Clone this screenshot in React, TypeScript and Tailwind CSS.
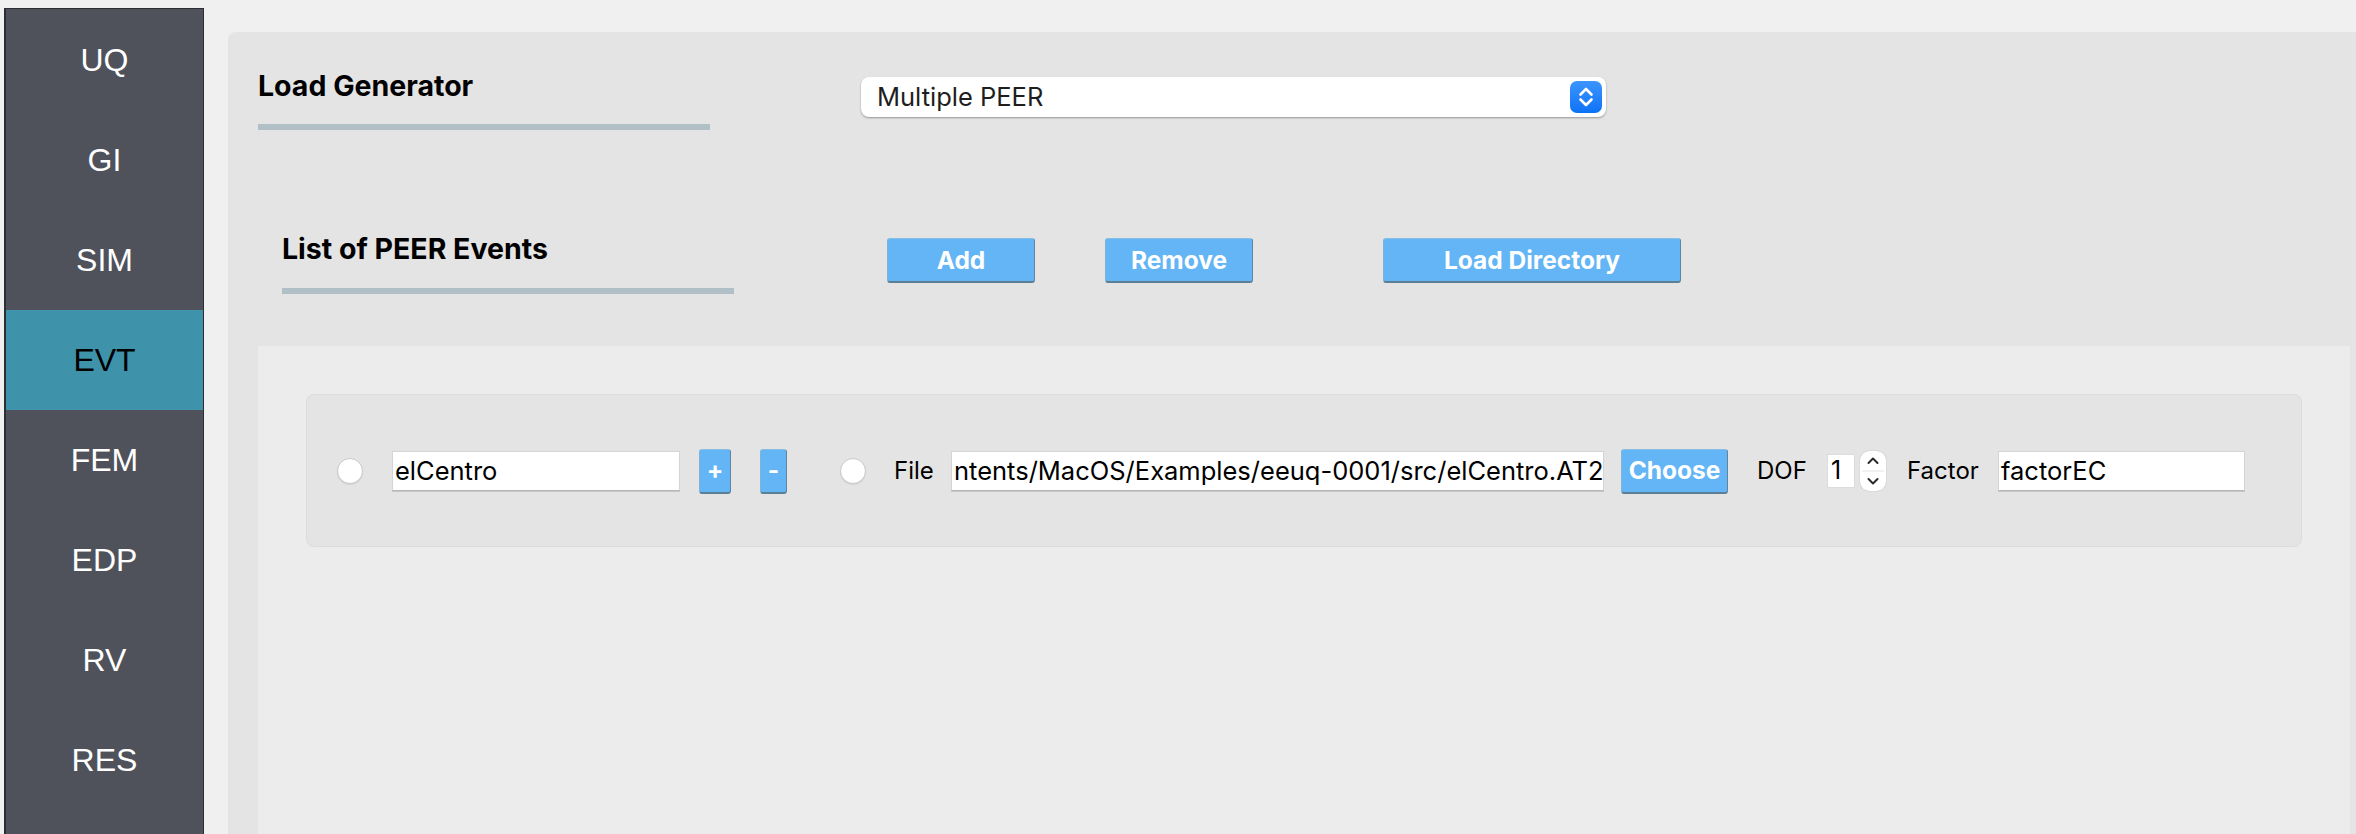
import React from "react";

const sideItems = ["UQ", "GI", "SIM", "EVT", "FEM", "EDP", "RV", "RES"];

function BlueButton({ label, w, extra = "" }: { label: string; w: string; extra?: string }) {
  return (
    <div
      className={`${w} ${extra} h-[45px] flex items-center justify-center bg-[#64b5f6] rounded-[3px] border border-t-[#86bfe3] border-l-[#7fb4d8] border-r-[#5d86a0] border-b-[2px] border-b-[#5d7f94] text-white font-bold text-[24.5px] leading-none shrink-0`}
    >
      {label}
    </div>
  );
}

function Radio() {
  return (
    <div className="w-[26px] h-[26px] rounded-full bg-white border border-[#c9c9c9] shadow-[0_1px_1px_rgba(0,0,0,0.08)] shrink-0" />
  );
}

function TextBox({ w, text, extra = "" }: { w: string; text: string; extra?: string }) {
  return (
    <div
      className={`${w} ${extra} h-[40px] bg-white border border-[#d4d4d4] border-b-[#b5b5b5] shadow-[0_1px_0_rgba(0,0,0,0.12)] flex items-center pl-[2px] pt-[1px] overflow-hidden whitespace-nowrap text-[25.5px] text-black shrink-0`}
    >
      {text}
    </div>
  );
}

export default function App() {
  return (
    <div
      className="w-[2356px] h-[834px] bg-[#f0f0f0] flex overflow-hidden"
      style={{ fontFamily: "Inter, 'Liberation Sans', sans-serif" }}
    >
      {/* Sidebar */}
      <div className="ml-[4px] mt-[8px] w-[200px] h-[826px] bg-[#4f525a] border-l-2 border-r border-t border-[#2d2e31] pt-[1px] shrink-0">
        {sideItems.map((s) => (
          <div
            key={s}
            className={`h-[100px] flex items-center justify-center text-[32px] ${
              s === "EVT" ? "bg-[#3e92a9] text-black" : "text-white"
            }`}
            style={{ fontFamily: "'Liberation Sans', Arial, sans-serif" }}
          >
            {s}
          </div>
        ))}
      </div>

      {/* Main panel */}
      <div className="ml-[24px] mt-[32px] flex-1 h-[802px] bg-[#e4e4e4] rounded-tl-[8px] pl-[30px] pr-[6px] flex flex-col">
        {/* Row 1 */}
        <div className="pt-[36px] flex items-start">
          <div className="w-[452px] flex flex-col shrink-0">
            <div className="mt-[2px] h-[32px] leading-[32px] text-[28.5px] font-bold text-black whitespace-nowrap">Load Generator</div>
            <div className="mt-[22px] h-[6px] bg-[#b1c0c7]" />
          </div>
          <div className="ml-[151px] mt-[9px] w-[745px] h-[40px] bg-white rounded-[8px] shadow-[0_1px_2px_rgba(0,0,0,0.35)] flex items-center pl-[16px] pr-[4px] shrink-0">
            <span className="flex-1 text-[25.5px] text-[#1e1e1e] leading-none">Multiple PEER</span>
            <div className="w-[32px] h-[32px] rounded-[7px] bg-gradient-to-b from-[#3b95ff] to-[#0a72f5] flex items-center justify-center">
              <svg width="32" height="32" viewBox="0 0 32 32" fill="none">
                <path d="M10.5 13.5 L16 8 L21.5 13.5" stroke="white" strokeWidth="2.6" strokeLinecap="round" strokeLinejoin="round" />
                <path d="M10.5 18.5 L16 24 L21.5 18.5" stroke="white" strokeWidth="2.6" strokeLinecap="round" strokeLinejoin="round" />
              </svg>
            </div>
          </div>
        </div>

        {/* Row 2 */}
        <div className="mt-[101px] flex items-start">
          <div className="ml-[24px] w-[452px] flex flex-col shrink-0">
            <div className="mt-[2px] h-[32px] leading-[32px] text-[28.5px] font-bold text-black whitespace-nowrap">List of PEER Events</div>
            <div className="mt-[23px] h-[6px] bg-[#b1c0c7]" />
          </div>
          <BlueButton label="Add" w="w-[148px]" extra="ml-[153px] mt-[7px]" />
          <BlueButton label="Remove" w="w-[148px]" extra="ml-[70px] mt-[7px]" />
          <BlueButton label="Load Directory" w="w-[298px]" extra="ml-[130px] mt-[7px]" />
        </div>

        {/* Inner list area */}
        <div className="mt-[52px] flex-1 bg-[#ececec] pt-[48px] px-[48px]">
          <div className="h-[153px] bg-[#e4e4e4] rounded-[8px] border border-[#dcdcdc] flex items-center pl-[30px] pt-[1px]">
            <Radio />
            <TextBox w="w-[288px]" text="elCentro" extra="ml-[29px]" />
            <BlueButton label="+" w="w-[32px]" extra="ml-[19px]" />
            <BlueButton label="-" w="w-[27px]" extra="ml-[29px]" />
            <div className="ml-[53px]">
              <Radio />
            </div>
            <div className="ml-[28px] w-[57px] text-[24px] text-black shrink-0">File</div>
            <TextBox w="w-[653px]" text="ntents/MacOS/Examples/eeuq-0001/src/elCentro.AT2" />
            <BlueButton label="Choose" w="w-[107px]" extra="ml-[17px]" />
            <div className="ml-[29px] w-[70px] text-[24px] text-black shrink-0">DOF</div>
            <div className="w-[28px] h-[34px] bg-white border border-[#dcdcdc] flex items-center pl-[3px] text-[25px] text-black shrink-0">
              1
            </div>
            <div className="ml-[5px] w-[26px] h-[40px] bg-white rounded-[9px] shadow-[0_0_1px_rgba(0,0,0,0.35)] shrink-0">
              <svg width="26" height="40" viewBox="0 0 26 40" fill="none">
                <path d="M8.5 12 L13 7.5 L17.5 12" stroke="#2a2a2a" strokeWidth="2" strokeLinecap="round" strokeLinejoin="round" />
                <line x1="2" y1="20" x2="24" y2="20" stroke="#e2e2e2" strokeWidth="1" />
                <path d="M8.5 28 L13 32.5 L17.5 28" stroke="#2a2a2a" strokeWidth="2" strokeLinecap="round" strokeLinejoin="round" />
              </svg>
            </div>
            <div className="ml-[21px] w-[91px] text-[24px] text-black shrink-0">Factor</div>
            <TextBox w="w-[247px]" text="factorEC" />
          </div>
        </div>
      </div>
    </div>
  );
}
